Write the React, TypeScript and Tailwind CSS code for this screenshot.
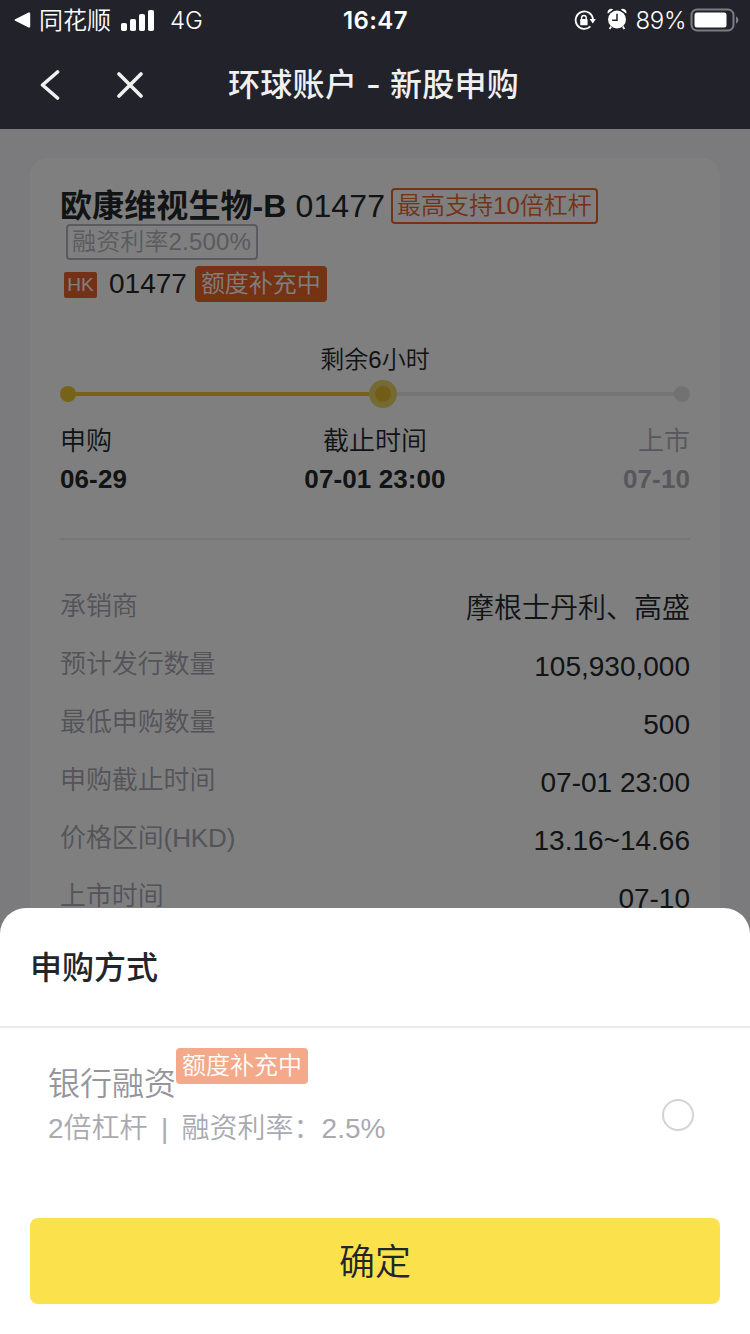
const timeline = [
  { label: '申购', date: '06-29', align: 'text-left', color: 'text-[#22262b]' },
  { label: '截止时间', date: '07-01 23:00', align: 'text-center', color: 'text-[#22262b]' },
  { label: '上市', date: '07-10', align: 'text-right', color: 'text-[#aeaeb8]' },
];

const details = [
  { label: '承销商', value: '摩根士丹利、高盛' },
  { label: '预计发行数量', value: '105,930,000' },
  { label: '最低申购数量', value: '500' },
  { label: '申购截止时间', value: '07-01 23:00' },
  { label: '价格区间(HKD)', value: '13.16~14.66' },
  { label: '上市时间', value: '07-10' },
];

function StatusBar() {
  return (
    <div className="flex h-10 items-center justify-between pl-[14px] pr-[11px] pt-0.5 font-['Inter','Noto_Sans_CJK_SC',sans-serif] text-[24px] leading-none text-white">
      <div className="flex w-[300px] items-center font-[350]">
        <svg className="-mt-0.5" width="17" height="16" viewBox="0 0 17 16" fill="currentColor">
          <path d="M1.2 7.2 14.6.6c.9-.4 1.6 0 1.6 1v12.8c0 1-.7 1.4-1.6 1L1.2 8.8c-.8-.4-.8-1.2 0-1.6z" />
        </svg>
        <span className="ml-[8px]">同花顺</span>
        <svg className="-mt-[3px] ml-[10px]" width="34" height="22" viewBox="0 0 34 22" fill="currentColor">
          <rect x="0" y="14" width="6" height="8" rx="1.8" />
          <rect x="9" y="10" width="6" height="12" rx="1.8" />
          <rect x="18" y="5" width="6" height="17" rx="1.8" />
          <rect x="27" y="1" width="6" height="21" rx="1.8" />
        </svg>
        <span className="ml-[15px]">4G</span>
      </div>
      <span className="font-semibold tracking-[0.4px]">16:47</span>
      <div className="flex w-[302px] items-center justify-end">
        <svg width="22" height="22" viewBox="0 0 22 22">
          <path d="M19 9.2A8.7 8.7 0 1 0 16.4 16.4" fill="none" stroke="currentColor" strokeWidth="1.8" />
          <path d="M15.6 9h6.2l-3 4.4z" fill="currentColor" />
          <rect x="6.2" y="9" width="7.4" height="6.2" rx=".8" fill="currentColor" />
          <path d="M7.6 10V7.8a2.3 2.3 0 0 1 4.6 0V10" fill="none" stroke="currentColor" strokeWidth="1.4" />
        </svg>
        <svg className="-mt-1 ml-[11px]" width="20" height="22" viewBox="0 0 20 22">
          <circle cx="10" cy="11.5" r="9" fill="currentColor" />
          <path d="M.8 5.6A3.6 3.6 0 0 1 6.2 1.4zM19.2 5.6a3.6 3.6 0 0 0-5.4-4.2z" fill="currentColor" />
          <path d="M4.2 18.6 2.6 21M15.8 18.6l1.6 2.4" stroke="currentColor" strokeWidth="1.8" />
          <path d="M10 5.8v6.4H5.2" fill="none" stroke="#22222a" strokeWidth="1.5" />
        </svg>
        <span className="ml-[9px] font-[350] tracking-[-0.4px]">89%</span>
        <svg className="-mt-0.5 ml-[4px]" width="49" height="24" viewBox="0 0 49 24">
          <rect x="1.5" y="1.5" width="42" height="21" rx="5.5" fill="none" stroke="#7c7c82" strokeWidth="2" />
          <rect x="4.5" y="4.5" width="32" height="15" rx="2.5" fill="#fff" />
          <path d="M46 8.5c1.6.6 2.4 2 2.4 3.5s-.8 2.9-2.4 3.5z" fill="#7c7c82" />
        </svg>
      </div>
    </div>
  );
}

function NavBar() {
  return (
    <div className="flex h-[89px] items-center pl-10 text-[#f0f0f0]">
      <svg width="20" height="30" viewBox="0 0 20 30" fill="none" stroke="currentColor" strokeWidth="3.6" strokeLinecap="round" strokeLinejoin="round">
        <path d="M17.5 2 2.5 15l15 13" />
      </svg>
      <svg className="ml-[57px]" width="26" height="26" viewBox="0 0 26 26" fill="none" stroke="currentColor" strokeWidth="3.6" strokeLinecap="round">
        <path d="M2 2l22 22M24 2 2 24" />
      </svg>
      <h1 className="ml-[85px] font-['Inter','Noto_Sans_CJK_SC',sans-serif] text-[32px] font-medium leading-none tracking-[0.3px]">环球账户 - 新股申购</h1>
    </div>
  );
}

function QuotaTag() {
  return (
    <span className="h-9 rounded bg-[#ec642b] px-1.5 text-[24px] font-[350] leading-9 text-white">额度补充中</span>
  );
}

function StockHeader() {
  return (
    <div className="flex h-[144px] flex-col">
      <div className="flex h-9 items-center whitespace-pre leading-9">
        <span className="text-[32px] font-bold tracking-[0.1px]">欧康维视生物-B</span>
        <span className="text-[32px] tracking-[0.1px]"> 01477</span>
        <span className="ml-[6px] h-9 w-[207px] rounded border-2 border-[#ec642b] px-1 text-[24px] font-[350] leading-8 text-[#ec642b]">最高支持10倍杠杆</span>
      </div>
      <div className="flex h-9 pl-1.5">
        <span className="w-[192px] whitespace-nowrap rounded border-2 border-[#b4b4be] px-1 text-[24px] font-[350] leading-8 tracking-[0.15px] text-[#b4b4be]">融资利率2.500%</span>
      </div>
      <div className="mt-1.5 flex h-9 items-center pl-1">
        <span className="mt-0.5 h-[26px] w-[33px] rounded-xs bg-[#e8622e] text-center text-[19px] leading-[26px] text-white">HK</span>
        <span className="ml-3 text-[28px] leading-8">01477</span>
        <span className="ml-2 flex">
          <QuotaTag />
        </span>
      </div>
    </div>
  );
}

function Progress() {
  return (
    <div>
      <div className="text-center text-[24px] font-[350] leading-8">剩余6小时</div>
      <svg className="mt-1 block" width="630" height="28" viewBox="0 0 630 28">
        <path d="M316 14h306" stroke="#ebebeb" strokeWidth="4" />
        <path d="M8 14h315" stroke="#ecc530" strokeWidth="4" />
        <circle cx="8" cy="14" r="8" fill="#ecc530" />
        <circle cx="323" cy="14" r="14" fill="#e9d468" />
        <circle cx="323" cy="14" r="8" fill="#e6bb2c" />
        <circle cx="622" cy="14" r="8" fill="#e5e5e5" />
      </svg>
      <div className="mt-[14px] grid grid-cols-3">
        {timeline.map((step) => (
          <div key={step.label} className={`${step.align} ${step.color} text-[26px] leading-[38px]`}>
            <div className="font-[350]">{step.label}</div>
            <div className="font-bold tracking-[0.1px]">{step.date}</div>
          </div>
        ))}
      </div>
    </div>
  );
}

function SubscribeSheet() {
  return (
    <div className="absolute inset-x-0 bottom-0 flex h-[426px] flex-col rounded-t-[26px] bg-white">
      <h2 className="h-[120px] border-b-2 border-[#e9e9ee] pl-[30px] text-[32px] font-medium leading-[120px] text-[#22262b]">申购方式</h2>
      <div className="flex h-[190px] justify-between pl-12 pr-14 pt-5">
        <div className="font-[350]">
          <div className="flex h-[62px]">
            <span className="pt-[14px] text-[32px] leading-[44px] text-[#95959b]">银行融资</span>
            <span className="flex opacity-55">
              <QuotaTag />
            </span>
          </div>
          <div className="flex pt-px text-[28px] leading-9 text-[#a9a9b1]">
            <span>2倍杠杆</span>
            <span className="w-[34px] text-center">|</span>
            <span>融资利率：2.5%</span>
          </div>
        </div>
        <span className="mt-[51px] size-8 rounded-full border-2 border-[#d2d2da]" />
      </div>
      <button className="mx-[30px] h-[86px] rounded-lg bg-[#fbe24c] pt-[3px] text-[36px] font-[350] text-[#22262b]">确定</button>
    </div>
  );
}

export default function App() {
  return (
    <div className="relative h-[1334px] w-[750px] overflow-hidden bg-[#f7f7fb] font-['Liberation_Sans','Noto_Sans_CJK_SC',sans-serif] text-[#22262b]">
      <header className="bg-[#22222a]">
        <StatusBar />
        <NavBar />
      </header>

      <main className="px-[30px] pt-[29px]">
        <section className="h-[1300px] rounded-[18px] bg-white px-[30px] pt-[30px]">
          <StockHeader />
          <div className="mt-[12px]">
            <Progress />
          </div>
          <div className="mt-[40px] h-0.5 bg-[#ececf0]" />
          <dl className="mt-[37px]">
            {details.map((item) => (
              <div key={item.label} className="flex h-[58px] items-center justify-between font-[350]">
                <dt className="text-[26px] leading-9 tracking-[-0.1px] text-[#a6a6b1]">{item.label}</dt>
                <dd className="pt-1.5 text-[28px] leading-9">{item.value}</dd>
              </div>
            ))}
          </dl>
        </section>
      </main>

      <div className="absolute inset-x-0 bottom-0 top-[129px] bg-black/50" />
      <SubscribeSheet />
    </div>
  );
}
